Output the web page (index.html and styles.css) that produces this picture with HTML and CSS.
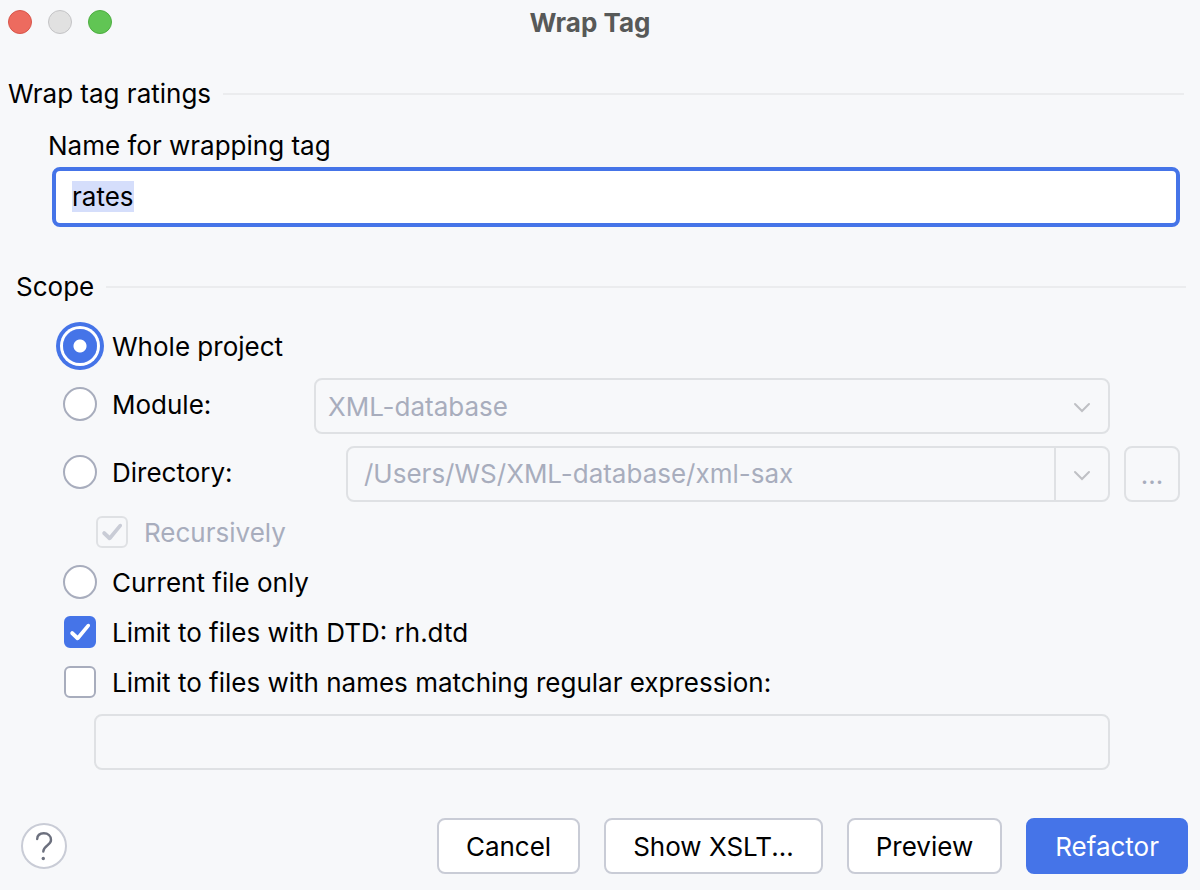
FILE: index.html
```
<!DOCTYPE html>
<html lang="en">
<head>
<meta charset="utf-8">
<title>Wrap Tag</title>
<link rel="stylesheet" href="styles.css">
</head>
<body>
<form class="dialog">
  <header class="titlebar">
    <div class="lights">
      <button type="button" class="light light-close" aria-label="Close"></button>
      <button type="button" class="light light-minimize" aria-label="Minimize" disabled></button>
      <button type="button" class="light light-zoom" aria-label="Zoom"></button>
    </div>
    <h1 class="title">Wrap Tag</h1>
  </header>

  <section class="naming">
    <h2 class="section-head">Wrap tag ratings</h2>
    <div class="name-field">
      <label class="name-label" for="tag-name">Name for wrapping tag</label>
      <input class="name-input" id="tag-name" type="text" value="rates" autofocus>
    </div>
  </section>

  <section class="scope">
    <h2 class="section-head">Scope</h2>
    <div class="options">
      <label class="option option-whole"><input class="radio" type="radio" name="scope" checked>Whole project</label>

      <div class="row">
        <label class="option option-module"><input class="radio" type="radio" name="scope">Module:</label>
        <div class="combo module-combo">
          <select class="combo-value module-select" aria-label="Module" disabled><option>XML-database</option></select>
          <svg class="chevron module-chevron" viewBox="0 0 18 12" aria-hidden="true"><path d="M2 2l7 7 7-7"/></svg>
        </div>
      </div>

      <div class="row row-directory">
        <label class="option option-directory"><input class="radio" type="radio" name="scope">Directory:</label>
        <div class="combo">
          <input class="combo-value path-input" type="text" aria-label="Directory path" value="/Users/WS/XML-database/xml-sax" disabled>
          <button type="button" class="combo-arrow" aria-label="Recent directories" disabled>
            <svg class="chevron" viewBox="0 0 18 12" aria-hidden="true"><path d="M2 2l7 7 7-7"/></svg>
          </button>
        </div>
        <button type="button" class="browse" disabled>...</button>
      </div>

      <div class="checks">
        <label class="option option-recursive"><input class="check" type="checkbox" checked disabled>Recursively</label>
        <label class="option"><input class="radio" type="radio" name="scope">Current file only</label>
        <label class="option"><input class="check" type="checkbox" checked>Limit to files with DTD: rh.dtd</label>
        <label class="option"><input class="check" type="checkbox">Limit to files with names matching regular expression:</label>
      </div>
      <input class="regex" type="text" aria-label="Regular expression" disabled>
    </div>
  </section>

  <footer class="footer">
    <button type="button" class="help" aria-label="Help">
      <svg class="help-icon" viewBox="0 0 20 32" aria-hidden="true"><path d="M3.200 9C3.400 5.200 6 3.300 9.800 3.300C14 3.300 17 6 17 10C17 15.500 9.300 15.500 9.300 21.500"/><circle cx="9.300" cy="28.500" r="1.700"/></svg>
    </button>
    <div class="actions">
      <button type="button" class="button">Cancel</button>
      <button type="button" class="button">Show XSLT...</button>
      <button type="button" class="button">Preview</button>
      <button type="submit" class="button button-primary">Refactor</button>
    </div>
  </footer>
</form>
<script src="script.js"></script>
</body>
</html>
```
FILE: script.js
```
const nameInput = document.getElementById('tag-name');
nameInput.focus();
nameInput.select();
```
FILE: styles.css
```
:root {
  --blue: #4574e8;
  --line: #dfe1e4;
  --muted: #a8adbd;
  --back: #f7f8fa;
}
* { box-sizing: border-box; }
body {
  margin: 0;
  background: var(--back);
  color: #000;
  font: 26px/32px Inter, "Liberation Sans", sans-serif;
}
input, select, button { font: inherit; color: inherit; margin: 0; }

.dialog { display: flex; flex-direction: column; min-height: 100vh; }

.titlebar {
  display: grid;
  grid-template-columns: 1fr auto 1fr;
  align-items: center;
  height: 46px;
  padding: 0 28px 2px 8px;
}
.lights { display: flex; gap: 16px; }
.light { width: 24px; height: 24px; padding: 0; border: 1px solid; border-radius: 50%; }
.light-close { background: #ed6b5f; border-color: #d8554a; }
.light-minimize { background: #e1e1e1; border-color: #c4c4c6; }
.light-zoom { background: #61c554; border-color: #4dae40; }
.title { margin: 0; padding-top: 2px; font-size: 26px; font-weight: 700; color: #575958; }

.section-head {
  display: flex;
  align-items: center;
  gap: 12px;
  margin: 0;
  font-size: 26px;
  font-weight: 400;
}
.section-head::after { content: ""; flex: 1; height: 2px; background: #ebecee; }

.naming { padding: 32px 16px 0 8px; }
.name-field { display: flex; flex-direction: column; padding: 20px 4px 0 40px; }
.name-input {
  height: 60px;
  margin: 5px 0 0 4px;
  padding: 0 16px 2px;
  border: 4px solid var(--blue);
  border-radius: 8px;
  background: #fff;
  outline: none;
}
.name-input::selection { background: #d5defb; color: #000; }

.scope { padding: 44px 14px 0 16px; }
.options { display: flex; flex-direction: column; padding: 19px 6px 0 47px; }
.option { display: flex; align-items: center; gap: 15px; padding-top: 2px; }
.option-whole { height: 48px; }
.row { display: flex; align-items: flex-start; margin-top: 8px; padding-right: 70px; }
.row-directory { margin-top: 12px; padding-right: 0; }
.option-module { width: 251px; height: 52px; }
.option-directory { width: 283px; height: 52px; }

.radio {
  appearance: none;
  flex: none;
  width: 34px;
  height: 34px;
  margin-bottom: 2px;
  border: 2px solid var(--muted);
  border-radius: 50%;
  background: #fff;
}
.radio:checked {
  border-color: var(--blue);
  background: radial-gradient(circle, #fff 6px, var(--blue) 7px);
  box-shadow: 0 0 0 3px #fff, 0 0 0 7px var(--blue);
}
.check {
  appearance: none;
  flex: none;
  width: 32px;
  height: 32px;
  margin: 0 1px 2px;
  border: 2px solid var(--muted);
  border-radius: 6px;
  background: #fff;
}
.check:checked {
  display: grid;
  place-items: center;
  border-color: var(--blue);
  background: var(--blue);
}
.check:checked::before {
  content: "";
  width: 22px;
  height: 18px;
  background: #fff;
  clip-path: path("M2.300 8.200Q.500 9.700 1.500 11.200L7.200 16.800Q8.700 18 10.200 16.500L20.800 3.400Q21.600 1.700 20.300 .9Q19 .2 17.800 1.400L8.600 12.600L4.300 8.500Q3.300 7.600 2.300 8.200Z");
}
.check:disabled { border-color: var(--line); background: none; }
.check:disabled::before { background: #c9ccd6; }

.combo {
  display: flex;
  flex: 1;
  min-width: 0;
  height: 56px;
  border: 2px solid var(--line);
  border-radius: 8px;
  color: var(--muted);
}
.combo-value {
  flex: 1;
  min-width: 0;
  border: 0;
  background: none;
  color: var(--muted);
  opacity: 1;
}
.module-combo { display: grid; align-items: center; }
.module-combo > * { grid-area: 1 / 1; }
.module-select { appearance: none; height: 52px; padding: 2px 12px 0; }
.module-chevron { justify-self: end; margin: 4px 17px 0 0; pointer-events: none; }
.path-input { padding: 0 16px; }
.combo-arrow {
  display: grid;
  place-items: center;
  width: 54px;
  padding: 4px 0 0;
  border: 0;
  border-left: 2px solid var(--line);
  background: none;
}
.chevron { width: 18px; height: 12px; fill: none; stroke: #bfc0c4; stroke-width: 2; stroke-linecap: round; }
.browse {
  width: 56px;
  height: 56px;
  margin-left: 14px;
  padding: 2px 0 0;
  border: 2px solid var(--line);
  border-radius: 8px;
  background: none;
  color: var(--muted);
}

.checks { display: flex; flex-direction: column; gap: 18px; margin-top: 14px; }
.checks .option { height: 32px; }
.option-recursive { padding-left: 32px; color: var(--muted); }
.regex {
  height: 56px;
  margin: 16px 70px 0 31px;
  padding: 0 16px;
  border: 2px solid var(--line);
  border-radius: 8px;
  background: none;
}

.footer {
  display: flex;
  align-items: center;
  justify-content: space-between;
  margin-top: auto;
  padding: 16px 12px 16px 21px;
}
.help {
  display: grid;
  place-items: center;
  width: 46px;
  height: 46px;
  padding: 0;
  border: 2px solid #c9ccd6;
  border-radius: 50%;
  background: #fff;
}
.help-icon { width: 20px; height: 32px; fill: none; stroke: #6c707e; stroke-width: 2.400; stroke-linecap: round; }
.help-icon circle { fill: #6c707e; stroke: none; }
.actions { display: flex; gap: 24px; }
.button {
  height: 56px;
  padding: 2px 27px 0;
  border: 2px solid #c9ccd6;
  border-radius: 8px;
  background: #fff;
}
.button-primary { border-color: var(--blue); background: var(--blue); color: #fff; }
```
